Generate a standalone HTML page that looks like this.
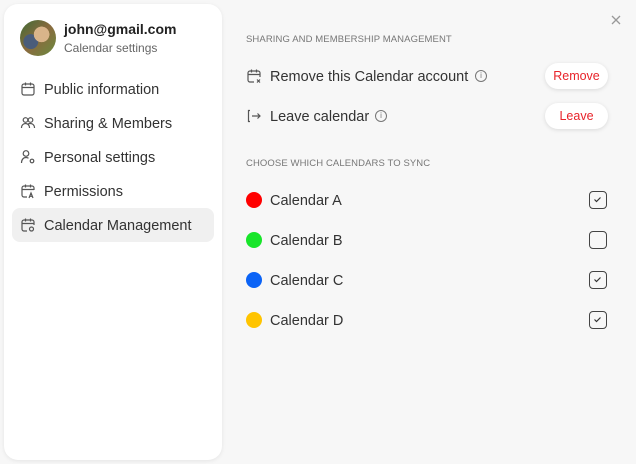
<!DOCTYPE html>
<html><head><style>
*{margin:0;padding:0;box-sizing:border-box}
body{width:636px;height:464px;background:#f7f7f7;font-family:"Liberation Sans",sans-serif;color:#333;position:relative;overflow:hidden}
.side{position:absolute;left:4px;top:4px;width:218px;height:456px;background:#fff;border-radius:14px;box-shadow:0 1px 4px rgba(0,0,0,.08)}
.a{position:absolute}
.av{left:20px;top:20px;width:36px;height:36px;border-radius:50%;background:radial-gradient(circle at 60% 40%,#d9b48a 0 25%,transparent 26%),radial-gradient(circle at 30% 60%,#4a5c7a 0 22%,transparent 23%),linear-gradient(135deg,#3f6b35,#8a6a3e 50%,#6a8b3f)}
.em{left:64px;top:21px;font-size:14px;font-weight:bold;color:#222}
.sub{left:64px;top:41px;font-size:12px;color:#666}
.mi{left:44px;font-size:14.5px;color:#333}
.ic{left:20px;width:16px;height:16px}
.sel{left:12px;top:208px;width:202px;height:34px;background:#f0f0f0;border-radius:8px}
.hd{left:246px;font-size:9.5px;color:#777;letter-spacing:.1px}
.rt{left:270px;font-size:14.5px;color:#333;line-height:18px;height:18px;white-space:nowrap}
.inf{width:12px;height:12px;border:1px solid #777;border-radius:50%;font-size:8px;line-height:10px;text-align:center;color:#777}
.btn{width:63px;height:26px;background:#fff;border-radius:13px;box-shadow:0 1px 4px rgba(0,0,0,.12);color:#e8232a;font-size:12.5px;text-align:center;line-height:26px}
.dot{left:246px;width:16px;height:16px;border-radius:50%}
.cb{left:589px;width:18px;height:18px;border:1.5px solid #444;border-radius:4px}
svg{display:block}
</style></head><body>
<div class="side"></div>
<div class="a av"></div>
<div class="a em">john@gmail.com</div>
<div class="a sub">Calendar settings</div>
<div class="a sel"></div>
<svg class="a ic" style="top:81px" viewBox="0 0 16 16" fill="none" stroke="#555" stroke-width="1.2"><rect x="2" y="3" width="12" height="11" rx="2"/><path d="M2 6.5h12M5.5 1.5v3M10.5 1.5v3"/></svg>
<div class="a mi" style="top:82px">Public information</div>
<svg class="a ic" style="top:115px" viewBox="0 0 16 16" fill="none" stroke="#555" stroke-width="1.2"><circle cx="5.5" cy="5" r="2.3"/><circle cx="10.5" cy="5" r="2.3"/><path d="M1.5 13c0-3 2-4.5 4-4.5s4 1.5 4 4.5M8 9c.8-.4 1.6-.5 2.5-.5 2 0 4 1.5 4 4.5"/></svg>
<div class="a mi" style="top:116px">Sharing &amp; Members</div>
<svg class="a ic" style="top:149px" viewBox="0 0 16 16" fill="none" stroke="#555" stroke-width="1.2"><circle cx="6" cy="4.5" r="2.8"/><path d="M1.5 14c0-3.5 2-5.5 4.5-5.5 1 0 1.8.3 2.5.8"/><circle cx="12" cy="12" r="1.8"/></svg>
<div class="a mi" style="top:150px">Personal settings</div>
<svg class="a ic" style="top:183px" viewBox="0 0 16 16" fill="none" stroke="#555" stroke-width="1.2"><path d="M7 14H4a2 2 0 0 1-2-2V5a2 2 0 0 1 2-2h8a2 2 0 0 1 2 2v2M2 6.5h12M5.5 1.5v3M10.5 1.5v3M9 15l2-5 2 5M9.8 13.3h2.4"/></svg>
<div class="a mi" style="top:184px">Permissions</div>
<svg class="a ic" style="top:217px" viewBox="0 0 16 16" fill="none" stroke="#555" stroke-width="1.2"><path d="M7 14H4a2 2 0 0 1-2-2V5a2 2 0 0 1 2-2h8a2 2 0 0 1 2 2v3M2 6.5h12M5.5 1.5v3M10.5 1.5v3"/><circle cx="11.5" cy="12" r="2"/></svg>
<div class="a mi" style="top:218px">Calendar Management</div>

<svg class="a" style="left:610px;top:14px" width="12" height="12" viewBox="0 0 12 12" stroke="#999" stroke-width="1.3"><path d="M2 2l8 8M10 2l-8 8"/></svg>

<div class="a hd" style="top:34px">SHARING AND MEMBERSHIP MANAGEMENT</div>
<svg class="a" style="left:246px;top:68px" width="16" height="16" viewBox="0 0 16 16" fill="none" stroke="#555" stroke-width="1.2"><path d="M8 14H4a2 2 0 0 1-2-2V5a2 2 0 0 1 2-2h8a2 2 0 0 1 2 2v4M2 6.5h12M5.5 1.5v3M10.5 1.5v3M11 11.5l3 3M14 11.5l-3 3"/></svg>
<div class="a rt" style="top:68px">Remove this Calendar account</div>
<div class="a inf" style="left:475px;top:70px">i</div>
<div class="a btn" style="left:545px;top:63px">Remove</div>
<svg class="a" style="left:246px;top:108px" width="16" height="16" viewBox="0 0 16 16" fill="none" stroke="#555" stroke-width="1.2"><path d="M4 2.5H2.5v11H4M6 8h8M11.5 5.5L14 8l-2.5 2.5"/></svg>
<div class="a rt" style="top:108px">Leave calendar</div>
<div class="a inf" style="left:375px;top:110px">i</div>
<div class="a btn" style="left:545px;top:103px">Leave</div>

<div class="a hd" style="top:158px">CHOOSE WHICH CALENDARS TO SYNC</div>
<div class="a dot" style="top:192px;background:#ff0000"></div>
<div class="a rt" style="top:192px">Calendar A</div>
<div class="a cb" style="top:191px"><svg width="15" height="15" viewBox="0 0 15 15" fill="none" stroke="#333" stroke-width="1.2"><path d="M4.5 7.5l2 2 4-4"/></svg></div>
<div class="a dot" style="top:232px;background:#18e52a"></div>
<div class="a rt" style="top:232px">Calendar B</div>
<div class="a cb" style="top:231px"></div>
<div class="a dot" style="top:272px;background:#0b63f6"></div>
<div class="a rt" style="top:272px">Calendar C</div>
<div class="a cb" style="top:271px"><svg width="15" height="15" viewBox="0 0 15 15" fill="none" stroke="#333" stroke-width="1.2"><path d="M4.5 7.5l2 2 4-4"/></svg></div>
<div class="a dot" style="top:312px;background:#ffc400"></div>
<div class="a rt" style="top:312px">Calendar D</div>
<div class="a cb" style="top:311px"><svg width="15" height="15" viewBox="0 0 15 15" fill="none" stroke="#333" stroke-width="1.2"><path d="M4.5 7.5l2 2 4-4"/></svg></div>
</body></html>
